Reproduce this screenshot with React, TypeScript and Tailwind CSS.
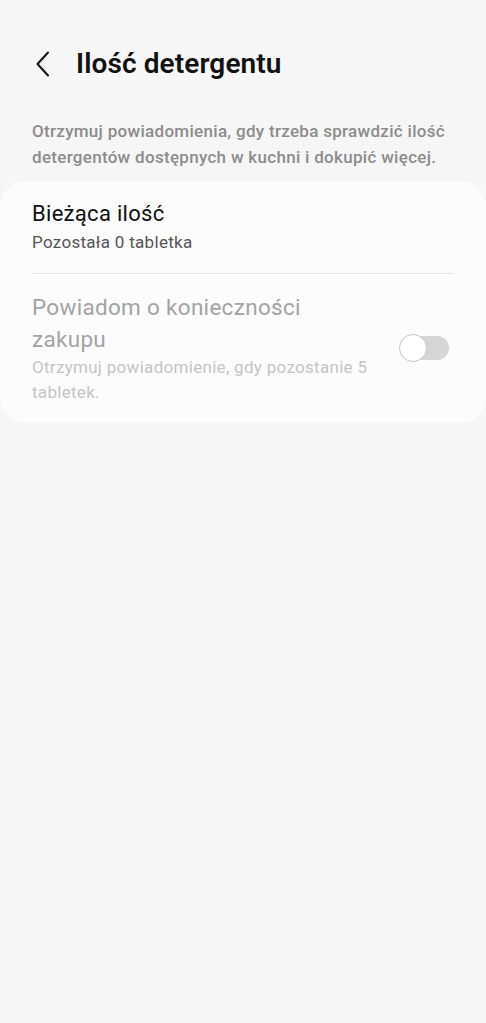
export default function App() {
  return (
    <div
      className="min-h-[1023px] w-full bg-[#f6f6f6]"
      style={{ fontFamily: 'Roboto, "Noto Sans", sans-serif' }}
    >
      <div className="flex h-[130px] items-start pt-[44px]">
        <button className="ml-[30px] flex h-[40px] w-[26px] items-center justify-center">
          <svg width="16" height="26" viewBox="0 0 16 26" fill="none">
            <path d="M13 1.5 L2.5 13 L13 24.5" stroke="#111" strokeWidth="2" strokeLinecap="round" strokeLinejoin="round" />
          </svg>
        </button>
        <h1 className="ml-[20px] text-[28px] font-semibold leading-[40px] tracking-[0.1px] text-[#111]">Ilość detergentu</h1>
      </div>

      <p className="-mt-[12px] px-[32px] text-[17px] font-medium leading-[26px] tracking-[0.3px] text-[#8c8c8c]">
        Otrzymuj powiadomienia, gdy trzeba sprawdzić ilość detergentów dostępnych w kuchni i dokupić więcej.
      </p>

      <div className="mt-[11px] rounded-[26px] bg-[#fcfcfc] pb-[18px]">
        <div className="px-[32px] pb-[19px] pt-[18px]">
          <div className="text-[22px] leading-[30px] tracking-[0.3px] text-[#111]">Bieżąca ilość</div>
          <div className="mt-[1px] text-[17px] leading-[24px] tracking-[0.3px] text-[#555]">Pozostała 0 tabletka</div>
        </div>
        <div className="mx-[32px] h-px bg-[#e6e6e6]" />
        <div className="flex items-center justify-between pl-[32px] pr-[36px] pt-[17px]">
          <div className="w-[345px]">
            <div className="text-[22.5px] leading-[32px] tracking-[0.3px] text-[#a3a3a3]">Powiadom o konieczności zakupu</div>
            <div className="text-[17px] leading-[25px] tracking-[0.3px] text-[#c4c4c4]">
              Otrzymuj powiadomienie, gdy pozostanie 5 tabletek.
            </div>
          </div>
          <div className="relative h-[28px] w-[51px] shrink-0">
            <div className="absolute left-[5px] top-[2px] h-[24px] w-[45px] rounded-full bg-[#d6d6d6]" />
            <div className="absolute left-0 top-0 h-[28px] w-[28px] rounded-full border border-[#c6c6c6] bg-white" />
          </div>
        </div>
      </div>
    </div>
  );
}
